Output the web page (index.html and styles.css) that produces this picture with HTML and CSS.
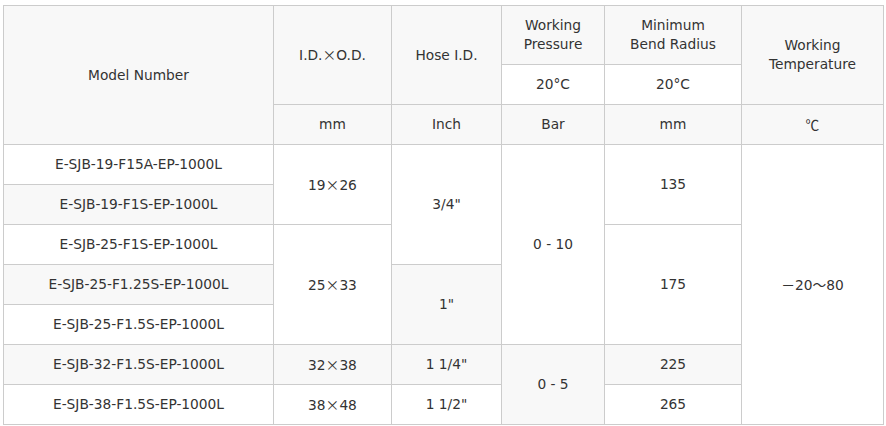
FILE: index.html
```html
<!DOCTYPE html>
<html lang="ja">
<head>
<meta charset="utf-8">
<title>Spec table</title>
<link rel="stylesheet" href="styles.css">
</head>
<body>
<div class="wrap">
<table class="spec">
  <colgroup>
    <col class="c1"><col class="c2"><col class="c3"><col class="c4"><col class="c5"><col class="c6">
  </colgroup>
  <thead>
    <tr class="h1">
      <th rowspan="3">Model Number</th>
      <th rowspan="2">I.D.<span class="cjk">×</span>O.D.</th>
      <th rowspan="2">Hose I.D.</th>
      <th>Working<br>Pressure</th>
      <th>Minimum<br>Bend Radius</th>
      <th rowspan="2">Working<br>Temperature</th>
    </tr>
    <tr class="h2">
      <td class="temp">20°C</td>
      <td class="temp">20°C</td>
    </tr>
    <tr class="h3">
      <th>mm</th>
      <th>Inch</th>
      <th>Bar</th>
      <th>mm</th>
      <th><span class="cjk">℃</span></th>
    </tr>
  </thead>
  <tbody>
    <tr>
      <td>E-SJB-19-F15A-EP-1000L</td>
      <td rowspan="2">19<span class="cjk">×</span>26</td>
      <td rowspan="3">3/4"</td>
      <td rowspan="5">0 - 10</td>
      <td rowspan="2">135</td>
      <td rowspan="7"><span class="cjk">－</span>20<span class="cjk">～</span>80</td>
    </tr>
    <tr>
      <td>E-SJB-19-F1S-EP-1000L</td>
    </tr>
    <tr>
      <td>E-SJB-25-F1S-EP-1000L</td>
      <td rowspan="3">25<span class="cjk">×</span>33</td>
      <td rowspan="3">175</td>
    </tr>
    <tr>
      <td>E-SJB-25-F1.25S-EP-1000L</td>
      <td rowspan="2">1"</td>
    </tr>
    <tr>
      <td>E-SJB-25-F1.5S-EP-1000L</td>
    </tr>
    <tr>
      <td>E-SJB-32-F1.5S-EP-1000L</td>
      <td>32<span class="cjk">×</span>38</td>
      <td>1 1/4"</td>
      <td rowspan="2">0 - 5</td>
      <td>225</td>
    </tr>
    <tr>
      <td>E-SJB-38-F1.5S-EP-1000L</td>
      <td>38<span class="cjk">×</span>48</td>
      <td>1 1/2"</td>
      <td>265</td>
    </tr>
  </tbody>
</table>
</div>
</body>
</html>
```

FILE: styles.css
```css
html, body {
  margin: 0;
  padding: 0;
  background: #fff;
}

.wrap {
  padding: 5px 3px;
}

.spec {
  border-collapse: collapse;
  table-layout: fixed;
  width: 881px;
  font-family: "DejaVu Sans", "Noto Sans CJK JP", sans-serif;
  font-size: 13.75px;
  line-height: 19px;
  color: #333;
}

.c1 { width: 270px; }
.c2 { width: 118px; }
.c3 { width: 110px; }
.c4 { width: 103px; }
.c5 { width: 137px; }
.c6 { width: 142px; }

.spec th,
.spec td {
  border: 1px solid #ccc;
  padding: 0 4px;
  text-align: center;
  vertical-align: middle;
  font-weight: normal;
}

.spec th {
  background: #f8f8f8;
}

.spec .temp {
  background: #fff;
}

.spec .h1 { height: 59px; }
.spec .h2 { height: 40px; }
.spec .h3 { height: 40px; }
.spec tbody tr { height: 40px; }

.spec tbody tr:nth-child(even) td {
  background: #f8f8f8;
}

.cjk {
  font-family: "Noto Sans CJK JP", sans-serif;
}
```
